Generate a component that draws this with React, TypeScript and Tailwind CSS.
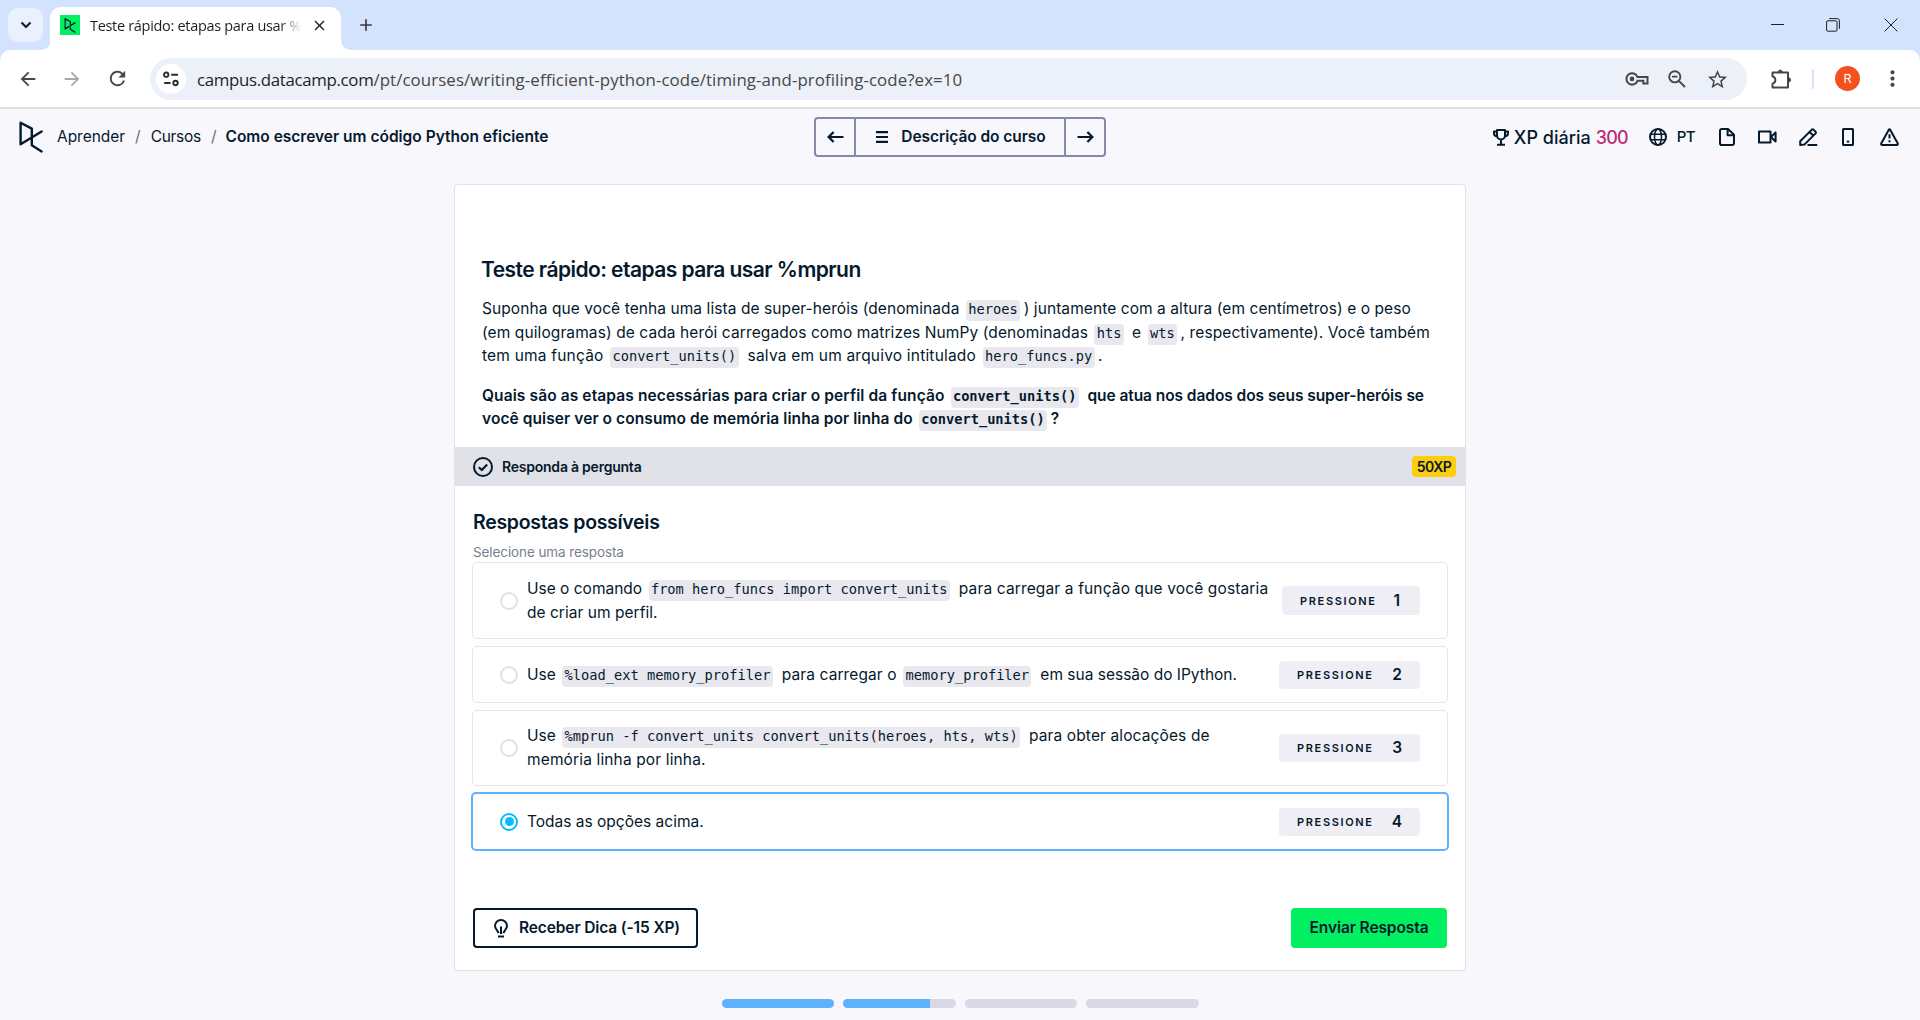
import React from "react";
import type { ReactNode } from "react";
import { MdAdd, MdArrowBack, MdArrowForward, MdClose, MdMoreVert, MdRefresh, MdStarBorder } from "react-icons/md";

function Logo({ className, stroke }: { className: string; stroke: number }) {
  return (
    <svg viewBox="0 0 24 32" className={className} fill="none" stroke="#05192d" strokeWidth={stroke} strokeLinejoin="round" strokeLinecap="round">
      <path d="M1.6 23.2V1.8L12.8 7.6V24.2L22.6 30.4M1.6 23.2L22.6 10.4" />
    </svg>
  );
}

function Code({ children }: { children: ReactNode }) {
  return (
    <code className="ml-[2px] mr-[3.5px] whitespace-pre rounded-[4px] bg-[#e8e8ee] px-[2.4px] pt-px pb-1 font-['DejaVu_Sans_Mono',monospace] text-[13.7px] leading-none tracking-normal">
      {children}
    </code>
  );
}

function Line({ className = "", children }: { className?: string; children: ReactNode }) {
  return <div className={`h-6 whitespace-pre leading-6 ${className}`}>{children}</div>;
}

function TabStrip() {
  return (
    <div className="flex h-[50px] items-end bg-[#d3e3fd]">
      <div className="mb-2 ml-2 flex h-[34px] w-[35px] items-center justify-center rounded-[10px] bg-[#e9f1fe]">
        <svg width="12" height="8" viewBox="0 0 12 8" fill="none" stroke="#1f1f1f" strokeWidth="2.2">
          <path d="M1.5 1.5L6 6L10.5 1.5" />
        </svg>
      </div>
      <svg width="10" height="10" viewBox="0 0 10 10" className="-mr-px ml-[-2px]" fill="#fff">
        <path d="M10 0A10 10 0 0 1 0 10H10Z" />
      </svg>
      <div className="flex h-[43px] w-[291px] items-center rounded-t-[11px] bg-white pl-[10px] pb-[7px]">
        <div className="flex size-5 items-center justify-center bg-[#03ef62]">
          <Logo className="h-[15px] w-3" stroke={2.6} />
        </div>
        <div className="ml-[10px] mt-px w-[212px] overflow-hidden whitespace-pre font-['Open_Sans',sans-serif] text-[14.5px] leading-6 tracking-[-0.31px] text-[#1f1f1f] [mask-image:linear-gradient(to_right,black_190px,transparent_212px)]">
          Teste rápido: etapas para usar %
        </div>
        <MdClose className="ml-[9px] size-[17px] text-[#1f1f1f]" />
      </div>
      <svg width="10" height="10" viewBox="0 0 10 10" fill="#fff">
        <path d="M0 0A10 10 0 0 0 10 10H0Z" />
      </svg>
      <MdAdd className="mb-[15px] ml-[5px] size-5 text-[#3c3c3c]" />
      <div className="mb-[18px] ml-auto mr-4 flex items-center text-[#1f1f1f]">
        <svg width="13" height="14" viewBox="0 0 13 14" stroke="currentColor"><path d="M0 6.5H13" /></svg>
        <svg width="14" height="14" viewBox="0 0 14 14" className="ml-[42px]" fill="none" stroke="currentColor">
          <rect x=".6" y="2.8" width="10.4" height="10.4" rx="1.2" />
          <path d="M3.2 .6H11.2A2.2 2.2 0 0 1 13.4 2.8V10.8" />
        </svg>
        <svg width="14" height="14" viewBox="0 0 14 14" className="ml-[44px] mr-[6px]" stroke="currentColor"><path d="M.6 .6L13.4 13.4M13.4 .6L.6 13.4" /></svg>
      </div>
    </div>
  );
}

function Toolbar() {
  return (
    <div className="bg-[#d3e3fd]">
      <div className="flex h-[59px] items-start rounded-t-[10px] border-b-2 border-[#dfdfdf] bg-white pt-2 text-[#474747]">
        <div className="flex h-[42px] items-center pb-px">
          <MdArrowBack className="ml-[17px] size-[22px]" />
          <MdArrowForward className="ml-[22px] size-[22px] text-[#a8a8a8]" />
          <MdRefresh className="ml-[23px] size-[23px]" />
        </div>
        <div className="ml-[21px] flex h-[42px] w-[1597px] items-center rounded-full bg-[#ecf0f9] pl-[6px]">
          <div className="flex size-[30px] items-center justify-center rounded-full bg-white">
            <svg width="16" height="16" viewBox="0 0 16 16" fill="none" stroke="#2c2c2c" strokeWidth="1.9">
              <circle cx="3.2" cy="3.7" r="2.2" />
              <path d="M8.2 3.7H15M1.2 12H7.6" />
              <circle cx="12.5" cy="12" r="2.2" />
            </svg>
          </div>
          <div className="ml-[11px] mt-px whitespace-pre font-['Open_Sans',sans-serif] text-[16.85px] leading-6">
            <span className="tracking-[-0.33px] text-[#1f1f1f]">campus.datacamp.com</span>
            <span className="tracking-[0.09px]">/pt/courses/writing-efficient-python-code/timing-and-profiling-code?ex=10</span>
          </div>
          <svg width="24" height="16" viewBox="0 0 24 16" className="ml-auto mr-[19px]" fill="none" stroke="currentColor" strokeWidth="2">
            <path d="M12.5 6H22.5V12.5H18.3V9.8H12.5A5.7 5.7 0 1 1 12.5 6Z" />
            <circle cx="7" cy="7.9" r="1.9" fill="currentColor" stroke="none" />
            <circle cx="7" cy="7.9" r="1.3" fill="currentColor" />
          </svg>
          <svg width="18" height="18" viewBox="0 0 18 18" className="mr-5" fill="none" stroke="currentColor" strokeWidth="1.9">
            <circle cx="6.8" cy="6.8" r="5.6" />
            <path d="M4.1 6.6H9.5M10.8 10.8L17 17" />
          </svg>
          <MdStarBorder className="mr-[18px] size-[23px]" />
        </div>
        <div className="flex h-[42px] items-center pb-px">
          <svg width="22" height="22" viewBox="0 0 22 22" className="ml-[23px]" fill="none" stroke="currentColor" strokeWidth="2" strokeLinejoin="round">
            <path d="M2.5 4.5H18V19.5H2.5V15.6A3.7 3.7 0 0 0 2.5 8.4Z" />
            <path d="M8.2 3.6A2.2 2.2 0 0 1 12.4 3.6ZM19 9.8A2.2 2.2 0 0 1 19 14Z" fill="currentColor" strokeWidth="1" />
          </svg>
          <div className="ml-[20px] h-5 w-[2px] rounded bg-[#d3e3fd]" />
          <div className="ml-[21px] flex size-[25px] items-center justify-center rounded-full bg-[#f4511e] font-['Roboto',sans-serif] text-[13px] text-white">R</div>
          <MdMoreVert className="ml-[20px] size-[25px]" />
        </div>
      </div>
    </div>
  );
}

function HeaderIcons() {
  return (
    <div className="flex items-center [&>svg]:fill-none [&>svg]:stroke-[#05192d] [&>svg]:[stroke-width:2]">
      <svg width="16" height="17" viewBox="0 0 16 17" strokeLinejoin="round">
        <path d="M4 1H12V6.5A4 4 0 0 1 4 6.5ZM8 10.5V15.5M4 15.8H12M4 2.6H1V4.4A3 3 0 0 0 4 7.2M12 2.6H15V4.4A3 3 0 0 1 12 7.2" />
      </svg>
      <div className="ml-[5px] mt-px whitespace-pre text-[18px] font-medium leading-6 tracking-[0.03px]">XP diária </div>
      <div className="mt-px text-[18px] font-medium leading-6 tracking-[-0.8px] text-[#c02c76]">300</div>
      <svg width="18" height="18" viewBox="0 0 18 18" className="ml-[21px]">
        <circle cx="9" cy="9" r="8" />
        <g strokeWidth="1.5"><ellipse cx="9" cy="9" rx="3.5" ry="8" /><path d="M1.5 6.3H16.5M1.5 11.7H16.5" /></g>
      </svg>
      <div className="ml-[10px] text-[15px] font-medium leading-6 tracking-[-0.6px]">PT</div>
      <svg width="16" height="18" viewBox="0 0 16 18" className="ml-[24px]" strokeLinejoin="round">
        <path d="M2.8 1H9L15 6.8V15.2A1.8 1.8 0 0 1 13.2 17H2.8A1.8 1.8 0 0 1 1 15.2V2.8A1.8 1.8 0 0 1 2.8 1ZM8.6 1.4V7.2H14.6" />
      </svg>
      <svg width="19" height="14" viewBox="0 0 19 14" className="ml-[23px]" strokeLinejoin="round">
        <path d="M1 1.5H12.5V12.5H1ZM13 7L17.6 2.4V11.6Z" />
      </svg>
      <svg width="19" height="18" viewBox="0 0 19 18" className="ml-[22px]" strokeLinejoin="round">
        <path d="M1.2 13.2L12.8 1.6Q13.6 .9 14.4 1.6L16.6 3.8Q17.3 4.6 16.6 5.4L5.4 16.6L1.2 17ZM10.6 4L14.4 7.8M8.5 17H18.2" />
      </svg>
      <svg width="12" height="18" viewBox="0 0 12 18" className="ml-[24px]">
        <rect x="1" y="1" width="10" height="16" rx=".6" /><path d="M4.8 13.6H7.2" />
      </svg>
      <svg width="19" height="18" viewBox="0 0 19 18" className="mr-[21px] ml-[26px]" strokeLinejoin="round">
        <path d="M8.7 1.9Q9.5 .7 10.3 1.9L17.8 15.4Q18.2 16.9 16.8 17H2.2Q.8 16.9 1.2 15.4ZM9.5 6.2V10.6M9.5 12.2V14.2" />
      </svg>
    </div>
  );
}

function CourseHeader() {
  return (
    <header className="grid h-14 grid-cols-[814px_292px_1fr] items-center">
      <div className="flex items-center whitespace-pre pl-[19px] text-[15.5px] leading-6">
        <Logo className="h-8 w-6" stroke={2.4} />
        <span className="ml-[14px] tracking-[-0.03px]">Aprender</span>
        <span className="ml-[10px] text-[#65707c]">/</span>
        <span className="ml-[10px] tracking-[-0.3px]">Cursos</span>
        <span className="ml-[10px] text-[#65707c]">/</span>
        <span className="ml-[9px] font-semibold">Como escrever um código Python eficiente</span>
      </div>
      <nav className="flex h-10 rounded-[4px] border-2 border-[#848ba9]">
        <button className="flex w-[40px] items-center justify-center border-r-2 border-[#848ba9]">
          <svg width="17" height="12" viewBox="0 0 17 12" fill="none" stroke="#05192d" strokeWidth="2.2"><path d="M16.5 6H1.8M6.6 1L1.6 6L6.6 11" /></svg>
        </button>
        <button className="flex flex-1 items-center justify-center whitespace-pre pl-[2px] text-[15.5px] font-semibold leading-6 tracking-[-0.05px]">
          <svg width="12" height="12" viewBox="0 0 12 12" className="mr-[13px]" stroke="#05192d" strokeWidth="2.2"><path d="M0 1.2H12M0 6H12M0 10.8H12" /></svg>
          Descrição do curso
        </button>
        <button className="flex w-[40px] items-center justify-center border-l-2 border-[#848ba9]">
          <svg width="17" height="12" viewBox="0 0 17 12" fill="none" stroke="#05192d" strokeWidth="2.2"><path d="M.5 6H15.2M10.4 1L15.4 6L10.4 11" /></svg>
        </button>
      </nav>
      <div className="flex justify-end"><HeaderIcons /></div>
    </header>
  );
}

function Option({ n, className, narrow, selected, children }: { n: number; className: string; narrow?: boolean; selected?: boolean; children: ReactNode }) {
  return (
    <div className={`flex items-center rounded-[5px] ${selected ? "-mx-px border-2 border-[#5eb1ff]" : "border border-[#e5e5ec]"} ${className}`}>
      <div className={`ml-[27px] flex size-[18px] shrink-0 items-center justify-center rounded-full border-2 ${selected ? "border-[#06bdfc]" : "border-[#e5e1da]"}`}>
        {selected && <div className="size-[9px] rounded-full bg-[#06bdfc]" />}
      </div>
      <div className="ml-[9px] flex-1">{children}</div>
      <div className={`mr-[27px] flex shrink-0 items-center justify-between rounded-[4px] bg-[#efeef5] pl-[18px] ${narrow ? "h-[29px] w-[138px] pr-5" : "h-7 w-[141px] pr-[18px]"}`}>
        <span className="text-[11px] font-semibold leading-4 tracking-[1.65px]">PRESSIONE</span>
        <span className="text-[15.5px] font-semibold leading-6">{n}</span>
      </div>
    </div>
  );
}

export default function App() {
  return (
    <div className="flex h-[1020px] w-[1920px] flex-col overflow-hidden bg-[#f7f7fc] font-['Inter',sans-serif] text-[#05192d]">
      <TabStrip />
      <Toolbar />
      <CourseHeader />
      <main className="mt-[19px] ml-[454px] flex h-[787px] w-[1012px] shrink-0 flex-col rounded-[4px] border border-[#e1e2e7] bg-white">
        <section className="h-[262px] pl-[27px] pt-[69px] text-[15.5px]">
          <h1 className="-ml-px h-[43px] whitespace-pre text-[21px] font-semibold leading-8 tracking-[-0.55px]">Teste rápido: etapas para usar %mprun</h1>
          <Line className="tracking-[0.08px]">Suponha que você tenha uma lista de super-heróis (denominada <Code>heroes</Code>) juntamente com a altura (em centímetros) e o peso</Line>
          <Line className="tracking-[0.1px]">(em quilogramas) de cada herói carregados como matrizes NumPy (denominadas <Code>hts</Code> e <Code>wts</Code>, respectivamente). Você também</Line>
          <Line className="-mt-px tracking-[0.2px]">tem uma função <Code>convert_units()</Code> <span className="pl-px">salva em um arquivo intitulado </span><Code>hero_funcs.py</Code>.</Line>
          <Line className="mt-4 font-semibold tracking-[0.11px]">Quais são as etapas necessárias para criar o perfil da função <Code>convert_units()</Code> <span className="pl-px tracking-[-0.06px]">que atua nos dados dos seus super-heróis se</span></Line>
          <Line className="-mt-px font-semibold tracking-[0.08px]">você quiser ver o consumo de memória linha por linha do <Code>convert_units()</Code>?</Line>
        </section>
        <section className="flex h-[39px] shrink-0 items-center bg-[#e1e2e7] pl-[18px] pr-[9px] text-[14px] font-semibold">
          <svg width="20" height="20" viewBox="0 0 20 20" fill="none" stroke="#05192d" strokeWidth="2">
            <circle cx="10" cy="10" r="9" /><path d="M5.8 10.2L8.8 13L14.2 7.4" strokeWidth="2.2" />
          </svg>
          <span className="ml-[9px] pb-px tracking-[-0.23px]">Responda à pergunta</span>
          <span className="ml-auto flex h-[21px] w-11 items-center justify-center rounded-[4px] bg-[#fcce0d] tracking-[-0.5px]">50XP</span>
        </section>
        <section className="flex flex-1 flex-col px-[17px] text-[15.5px]">
          <h2 className="mt-5 pl-px text-[19.5px] font-semibold leading-8 tracking-[-0.3px]">Respostas possíveis</h2>
          <p className="mt-[5px] h-[19px] pl-px text-[13.5px] leading-[19px] tracking-[-0.1px] text-[#77818c]">Selecione uma resposta</p>
          <Option n={1} narrow className="h-[77px]">
            <Line>Use o comando <Code>from hero_funcs import convert_units</Code> <span className="pl-px tracking-[0.14px]">para carregar a função que você gostaria</span></Line>
            <Line className="tracking-[0.03px]">de criar um perfil.</Line>
          </Option>
          <Option n={2} className="mt-[7px] h-[57px]">
            <Line>Use <Code>%load_ext memory_profiler</Code> <span className="pl-px tracking-[0.1px]">para carregar o </span><Code>memory_profiler</Code> <span className="pl-px">em sua sessão do IPython.</span></Line>
          </Option>
          <Option n={3} className="mt-[7px] h-[76px]">
            <Line>Use <Code>%mprun -f convert_units convert_units(heroes, hts, wts)</Code> <span className="pl-px tracking-[0.12px]">para obter alocações de</span></Line>
            <Line className="tracking-[0.14px]">memória linha por linha.</Line>
          </Option>
          <Option n={4} selected className="mt-[6px] h-[59px]">
            <Line>Todas as opções acima.</Line>
          </Option>
          <div className="mt-auto mb-[22px] flex justify-between pl-px pr-px">
            <button className="flex h-10 w-[225px] items-center whitespace-pre rounded-[4px] border-2 border-[#05192d] pl-[19px] font-semibold tracking-[-0.12px]">
              <svg width="14" height="19" viewBox="0 0 14 19" className="mr-[11px]" fill="none" stroke="#05192d" strokeWidth="2">
                <path d="M4.4 14.3C4.4 11.6 1 10.4 1 7A6 6 0 0 1 13 7C13 10.4 9.6 11.6 9.6 14.3M7 7.5V15M4 17.6H10" />
              </svg>
              Receber Dica (-15 XP)
            </button>
            <button className="h-10 w-[156px] whitespace-pre rounded-[4px] bg-[#03ef62] font-semibold tracking-[-0.1px]">Enviar Resposta</button>
          </div>
        </section>
      </main>
      <div className="mt-7 ml-[722px] flex gap-[9px]">
        <div className="h-[9px] w-28 rounded-full bg-[#5eb1ff]" />
        <div className="h-[9px] w-[113px] overflow-hidden rounded-full bg-[#d9d9e6]"><div className="h-full w-[87px] bg-[#5eb1ff]" /></div>
        <div className="h-[9px] w-28 rounded-full bg-[#d9d9e6]" />
        <div className="h-[9px] w-[113px] rounded-full bg-[#d9d9e6]" />
      </div>
    </div>
  );
}
